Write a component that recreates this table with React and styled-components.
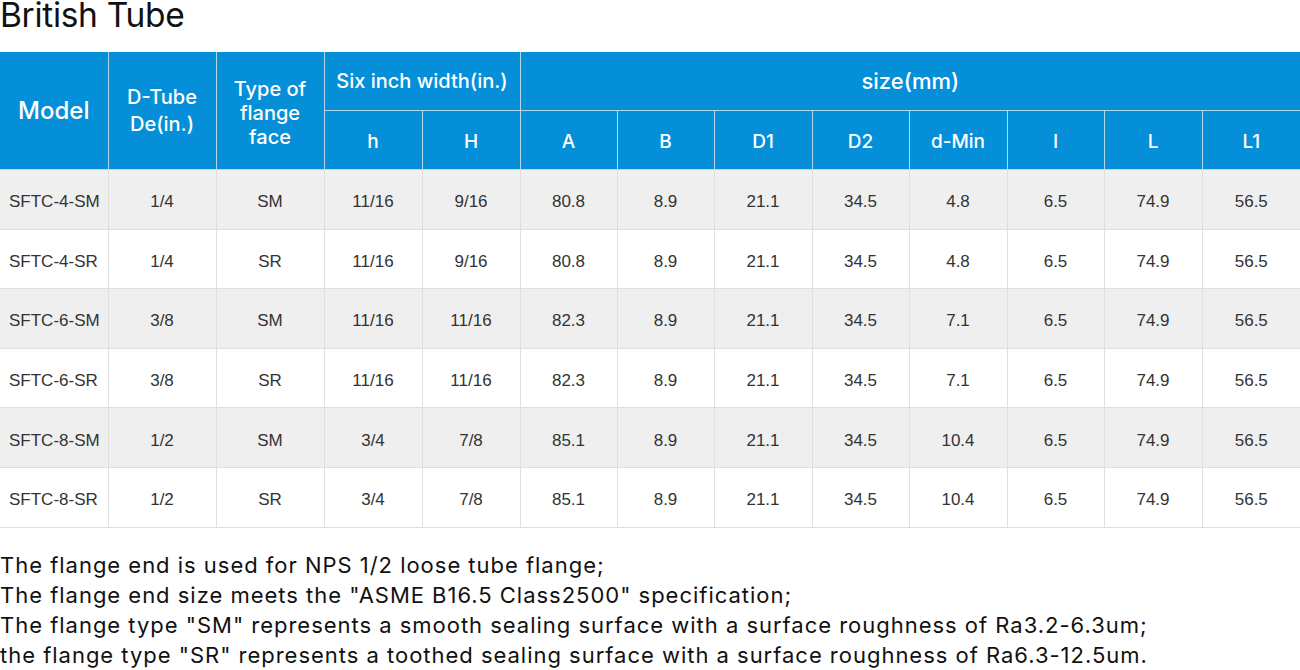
import React from 'react';
import styled, { createGlobalStyle } from 'styled-components';

const GlobalStyle = createGlobalStyle`
  html, body {
    margin: 0;
    padding: 0;
    background: #ffffff;
  }
  body {
    font-family: 'Inter', 'Noto Sans', sans-serif;
  }
`;

const Page = styled.div`
  width: 1300px;
  overflow: hidden;
`;

const Title = styled.h1`
  margin: -5px 0 16px;
  font-family: 'Inter', sans-serif;
  font-weight: 400;
  font-size: 33.5px;
  line-height: 41px;
  color: #111;
  letter-spacing: -0.3px;
`;

const Table = styled.table`
  width: 1300px;
  border-collapse: collapse;
  table-layout: fixed;
`;

const HeadCell = styled.th`
  background: #058fd8;
  color: #ffffff;
  font-family: 'Inter', sans-serif;
  font-weight: 500;
  font-size: ${(p) => p.$size || 19}px;
  line-height: ${(p) => p.$lh || 24}px;
  height: ${(p) => (p.$drop ? 54 : 58)}px;
  padding: ${(p) => (p.$drop ? '4px 4px 0' : '0 4px')};
  text-align: center;
  border: 1px solid #b3d9ef;
  border-top: none;
  &:first-child { border-left: none; }
  &:last-child { border-right: none; }
`;

const Row = styled.tr`
  background: ${(p) => (p.$alt ? '#efeff0' : '#ffffff')};
`;

const Cell = styled.td`
  height: 52.6px;
  padding: 6px 4px 0;
  font-family: 'Liberation Sans', Arial, sans-serif;
  font-size: 17px;
  color: #333;
  text-align: ${(p) => (p.$left ? 'left' : 'center')};
  padding-left: ${(p) => (p.$left ? '9px' : '4px')};
  border: 1px solid #dfdfdf;
  &:first-child { border-left: none; }
  &:last-child { border-right: none; }
`;

const Notes = styled.div`
  margin-top: 22px;
  font-family: 'Inter', sans-serif;
  font-size: 22px;
  line-height: 30px;
  letter-spacing: 0.98px;
  color: #111;
`;

const widths = [108, 108, 108, 98, 98, 97, 97, 98, 97, 98, 97, 98, 98];
const sizeCols = ['A', 'B', 'D1', 'D2', 'd-Min', 'I', 'L', 'L1'];

const rows = [
  ['SFTC-4-SM', '1/4', 'SM', '11/16', '9/16', '80.8', '8.9', '21.1', '34.5', '4.8', '6.5', '74.9', '56.5'],
  ['SFTC-4-SR', '1/4', 'SR', '11/16', '9/16', '80.8', '8.9', '21.1', '34.5', '4.8', '6.5', '74.9', '56.5'],
  ['SFTC-6-SM', '3/8', 'SM', '11/16', '11/16', '82.3', '8.9', '21.1', '34.5', '7.1', '6.5', '74.9', '56.5'],
  ['SFTC-6-SR', '3/8', 'SR', '11/16', '11/16', '82.3', '8.9', '21.1', '34.5', '7.1', '6.5', '74.9', '56.5'],
  ['SFTC-8-SM', '1/2', 'SM', '3/4', '7/8', '85.1', '8.9', '21.1', '34.5', '10.4', '6.5', '74.9', '56.5'],
  ['SFTC-8-SR', '1/2', 'SR', '3/4', '7/8', '85.1', '8.9', '21.1', '34.5', '10.4', '6.5', '74.9', '56.5'],
];

const notes = [
  'The flange end is used for NPS 1/2 loose tube flange;',
  'The flange end size meets the "ASME B16.5 Class2500" specification;',
  'The flange type "SM" represents a smooth sealing surface with a surface roughness of Ra3.2-6.3um;',
  'the flange type "SR" represents a toothed sealing surface with a surface roughness of Ra6.3-12.5um.',
];

const App = () => (
  <Page>
    <GlobalStyle />
    <Title>British Tube</Title>
    <Table>
      <colgroup>
        {widths.map((w, i) => <col key={i} style={{ width: w }} />)}
      </colgroup>
      <thead>
        <tr>
          <HeadCell rowSpan={2} $size={24}>Model</HeadCell>
          <HeadCell rowSpan={2} $size={20} $lh={27}>D-Tube<br />De(in.)</HeadCell>
          <HeadCell rowSpan={2} $size={20} $drop>Type of<br />flange<br />face</HeadCell>
          <HeadCell colSpan={2} $size={20}>Six inch width(in.)</HeadCell>
          <HeadCell colSpan={8} $size={22}>size(mm)</HeadCell>
        </tr>
        <tr>
          <HeadCell $drop>h</HeadCell>
          <HeadCell $drop>H</HeadCell>
          {sizeCols.map((c) => <HeadCell key={c} $drop>{c}</HeadCell>)}
        </tr>
      </thead>
      <tbody>
        {rows.map((r, i) => (
          <Row key={r[0]} $alt={i % 2 === 0}>
            {r.map((v, j) => <Cell key={j} $left={j === 0}>{v}</Cell>)}
          </Row>
        ))}
      </tbody>
    </Table>
    <Notes>
      {notes.map((n) => <div key={n}>{n}</div>)}
    </Notes>
  </Page>
);

export default App;
